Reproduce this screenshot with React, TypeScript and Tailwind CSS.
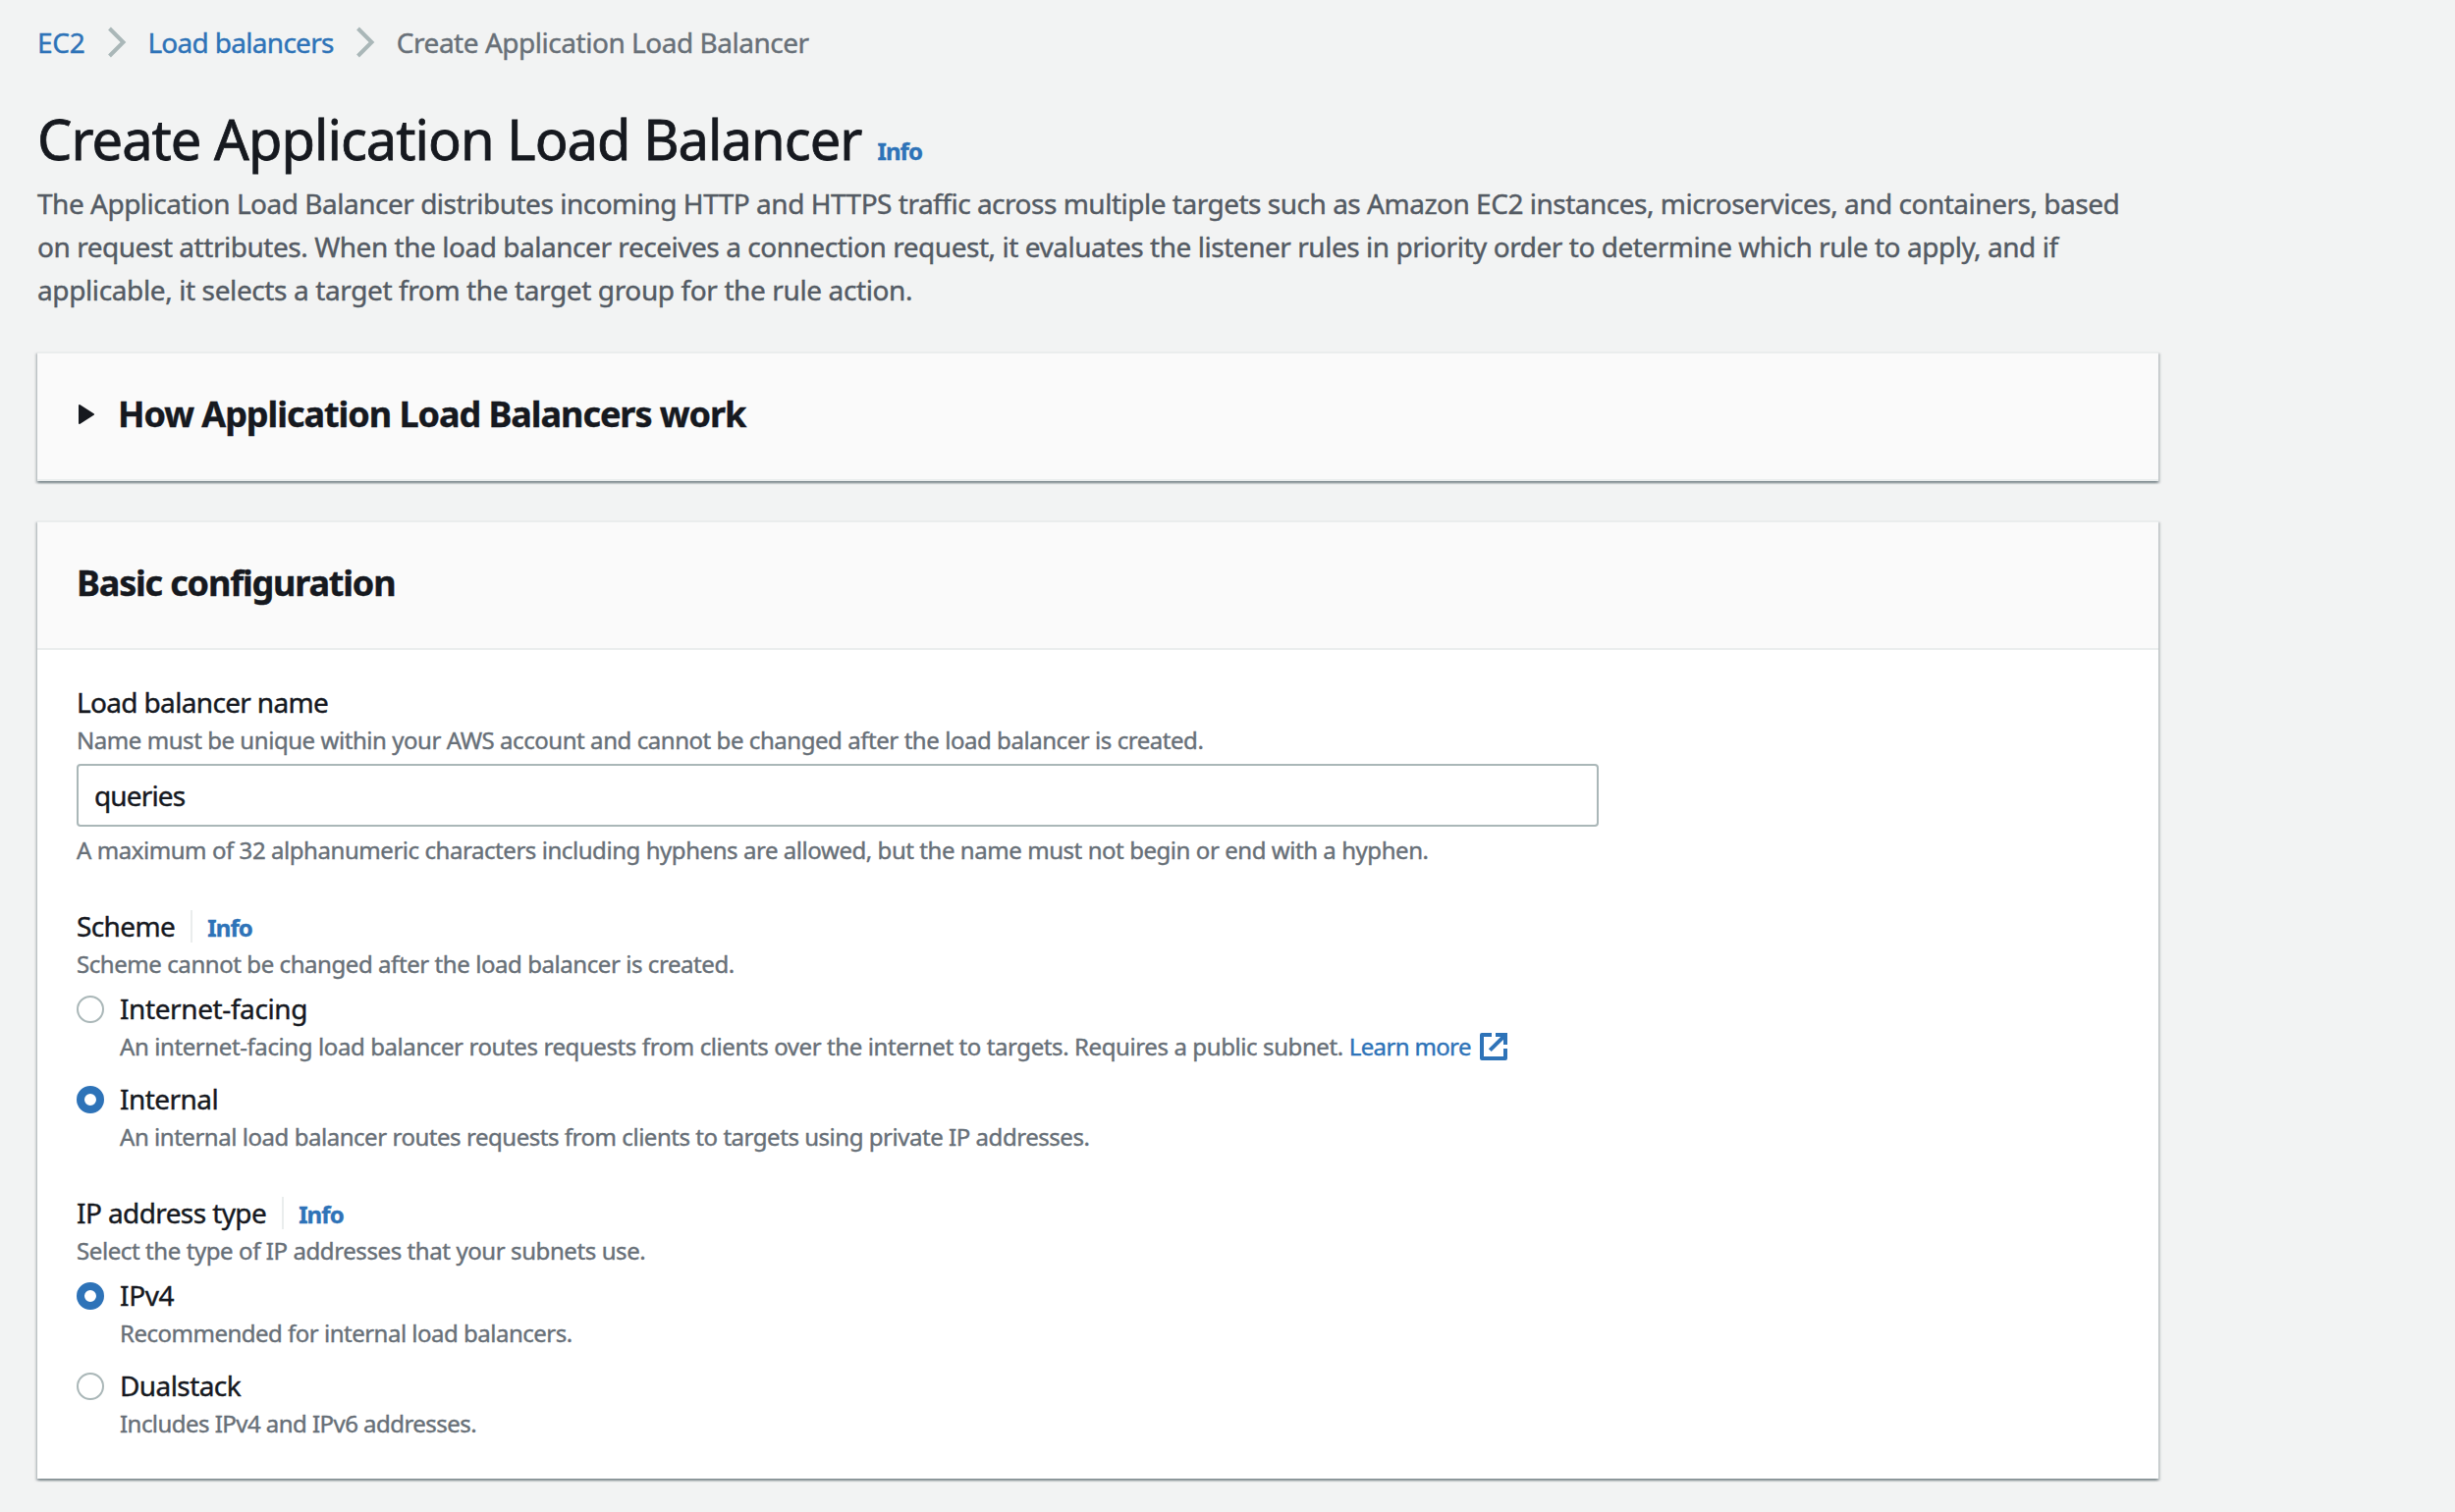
import React from "react";

function Info({ className = "" }: { className?: string }) {
  return (
    <a className={`text-2xl leading-[44px] font-bold tracking-[-0.9px] text-[#2e73b8] ${className}`}>Info</a>
  );
}

function Chevron() {
  return (
    <svg className="h-8 w-5 shrink-0" viewBox="0 0 20 32" fill="none" stroke="#aab7b8" strokeWidth="4">
      <path d="M1.5 2 L15.5 16 L1.5 30" />
    </svg>
  );
}

function ExternalIcon() {
  return (
    <svg className="size-7 shrink-0" viewBox="0 0 28 28" fill="none" stroke="#2e73b8" strokeWidth="4">
      <path d="M12 2H2V26H26V16" strokeLinejoin="round" />
      <path d="M16 2H26V12" />
      <path d="M10.3 17.7L25 3" />
    </svg>
  );
}

function Label({ className, info, children }: { className: string; info?: boolean; children: string }) {
  return (
    <div className="flex h-11 text-[28px] leading-[44px] text-[#16191f]">
      <span className={`whitespace-nowrap ${className}`}>{children}</span>
      {info && (
        <>
          <span className="mt-1.5 ml-4 h-[33px] w-0.5 bg-[#eaeded]" />
          <Info className="mt-0.5 ml-[15px]" />
        </>
      )}
    </div>
  );
}

function Hint({ className, children }: { className: string; children: React.ReactNode }) {
  return <div className={`h-8 text-2xl leading-8 whitespace-nowrap text-[#687078] ${className}`}>{children}</div>;
}

function Radio({
  checked,
  label,
  labelClass,
  children,
}: {
  checked?: boolean;
  label: string;
  labelClass: string;
  children: React.ReactNode;
}) {
  return (
    <div className="flex gap-4">
      <span
        className={`mt-[9px] size-7 shrink-0 rounded-full bg-white ${
          checked ? "border-8 border-[#2e73b8]" : "border-2 border-[#aab7b8]"
        }`}
      />
      <div className="flex flex-col gap-px">
        <Label className={labelClass}>{label}</Label>
        {children}
      </div>
    </div>
  );
}

const panel =
  "w-[2160px] border-t-2 border-[#eaeded] shadow-[0_2px_2px_0_rgba(0,28,36,0.3),2px_2px_2px_0_rgba(0,28,36,0.15),-2px_2px_2px_0_rgba(0,28,36,0.15)]";

export default function App() {
  return (
    <div className="h-[1540px] w-[2500px] overflow-hidden bg-[#f2f3f3] pt-[21px] pl-[38px] font-['Noto_Sans',sans-serif] [-webkit-text-stroke:0.4px]">
      <nav className="flex h-11 items-center text-[28px] leading-[44px] whitespace-nowrap">
        <a className="tracking-[-0.3px] text-[#2e73b8]">EC2</a>
        <span className="ml-6 flex w-10"><Chevron /></span>
        <a className="tracking-[-0.7px] text-[#2e73b8]">Load balancers</a>
        <span className="ml-[23px] flex w-[41px]"><Chevron /></span>
        <span className="tracking-[-0.47px] text-[#687078]">Create Application Load Balancer</span>
      </nav>

      <header>
        <div className="mt-10 flex h-[72px] items-baseline">
          <h1 className="text-[56px] leading-[72px] tracking-[-0.95px] whitespace-nowrap text-[#16191f] [-webkit-text-stroke:0.8px]">
            Create Application Load Balancer
          </h1>
          <Info className="ml-4" />
        </div>
        <p className="mt-2 text-[28px] leading-[44px] whitespace-nowrap text-[#545b64]">
          <span className="tracking-[-0.488px]">
            The Application Load Balancer distributes incoming HTTP and HTTPS traffic across multiple targets such as Amazon EC2 instances, microservices, and containers, based
          </span>
          <br />
          <span className="tracking-[-0.462px]">
            on request attributes. When the load balancer receives a connection request, it evaluates the listener rules in priority order to determine which rule to apply, and if
          </span>
          <br />
          <span className="tracking-[-0.385px]">
            applicable, it selects a target from the target group for the rule action.
          </span>
        </p>
      </header>

      <section className={`mt-[41px] h-[132px] border-b-2 bg-[#fafafa] ${panel}`}>
        <div className="flex pt-10 pl-[42px]">
          <svg className="mt-3 h-5 w-4" viewBox="0 0 16 20" fill="#16191f" stroke="#16191f" strokeWidth="2" strokeLinejoin="round">
            <path d="M1 1L15 10L1 19Z" />
          </svg>
          <h2 className="ml-6 text-4xl leading-[44px] font-bold tracking-[-1.05px] whitespace-nowrap text-[#16191f]">
            How Application Load Balancers work
          </h2>
        </div>
      </section>

      <section className={`mt-10 h-[976px] bg-white ${panel}`}>
        <div className="h-[130px] border-b-2 border-[#eaeded] bg-[#fafafa] pt-10 pl-10">
          <h2 className="text-4xl leading-[44px] font-bold tracking-[-1.18px] text-[#16191f]">Basic configuration</h2>
        </div>
        <div className="flex flex-col gap-[39px] pt-[31px] pl-10">
          <div>
            <Label className="tracking-[-0.66px]">Load balancer name</Label>
            <Hint className="mt-px tracking-[-0.443px]">
              Name must be unique within your AWS account and cannot be changed after the load balancer is created.
            </Hint>
            <div className="mt-2 flex h-16 w-[1550px] items-center rounded border-2 border-[#aab7b8] bg-white pl-4 text-[28px] leading-[44px] tracking-[-0.85px] text-[#16191f]">
              queries
            </div>
            <Hint className="mt-2 tracking-[-0.44px]">
              A maximum of 32 alphanumeric characters including hyphens are allowed, but the name must not begin or end with a hyphen.
            </Hint>
          </div>

          <div>
            <Label info className="tracking-[-0.6px]">Scheme</Label>
            <Hint className="mt-px tracking-[-0.43px]">Scheme cannot be changed after the load balancer is created.</Hint>
            <div className="mt-[7px] flex flex-col gap-[15px]">
              <Radio label="Internet-facing" labelClass="tracking-[-0.4px]">
                <Hint className="flex items-center">
                  <span className="tracking-[-0.4px]">
                    An internet-facing load balancer routes requests from clients over the internet to targets. Requires a public subnet.
                  </span>
                  <a className="ml-[6px] tracking-[-0.65px] text-[#2e73b8]">Learn more</a>
                  <span className="ml-[9px] flex"><ExternalIcon /></span>
                </Hint>
              </Radio>
              <Radio checked label="Internal" labelClass="tracking-[-0.55px]">
                <Hint className="tracking-[-0.46px]">
                  An internal load balancer routes requests from clients to targets using private IP addresses.
                </Hint>
              </Radio>
            </div>
          </div>

          <div>
            <Label info className="tracking-[-0.6px]">IP address type</Label>
            <Hint className="mt-px tracking-[-0.41px]">Select the type of IP addresses that your subnets use.</Hint>
            <div className="mt-[7px] flex flex-col gap-[15px]">
              <Radio checked label="IPv4" labelClass="tracking-[-0.35px]">
                <Hint className="tracking-[-0.5px]">Recommended for internal load balancers.</Hint>
              </Radio>
              <Radio label="Dualstack" labelClass="tracking-[-0.58px]">
                <Hint className="tracking-[-0.54px]">Includes IPv4 and IPv6 addresses.</Hint>
              </Radio>
            </div>
          </div>
        </div>
      </section>
    </div>
  );
}
